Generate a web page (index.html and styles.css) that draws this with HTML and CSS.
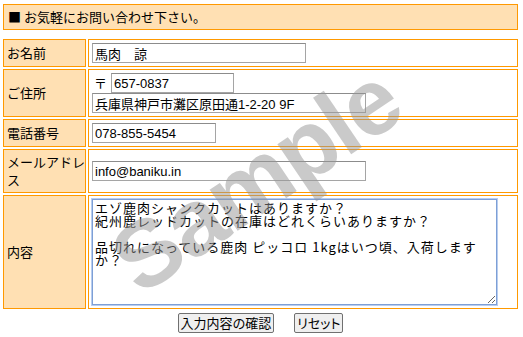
FILE: index.html
```html
<!DOCTYPE html>
<html lang="ja">
<head>
  <meta charset="UTF-8" />
  <meta name="viewport" content="width=device-width, initial-scale=1.0"/>
  <title>お問い合わせ</title>
  <link rel="stylesheet" href="styles.css">
</head>
<body>
  <div class="wrap">
    <div class="lead">■ お気軽にお問い合わせ下さい。</div>

    <table class="form">
      <tr>
        <th>お名前</th>
        <td><input type="text" class="w-name" value="馬肉　諒"></td>
      </tr>
      <tr>
        <th>ご住所</th>
        <td>
          <div class="zip"><span>〒</span><input type="text" class="w-zip" value="657-0837"></div>
          <input type="text" class="w-addr" value="兵庫県神戸市灘区原田通1-2-20 9F">
        </td>
      </tr>
      <tr>
        <th>電話番号</th>
        <td><input type="text" class="w-tel" value="078-855-5454"></td>
      </tr>
      <tr>
        <th>メールアドレス</th>
        <td><input type="text" class="w-addr" value="info@baniku.in"></td>
      </tr>
      <tr>
        <th>内容</th>
        <td><textarea class="msg" spellcheck="false">エゾ鹿肉シャンクカットはありますか？
紀州鹿レッドカットの在庫はどれくらいありますか？

品切れになっている鹿肉 ピッコロ 1kgはいつ頃、入荷しますか？</textarea></td>
      </tr>
    </table>

    <div class="buttons">
      <button type="button">入力内容の確認</button>
      <button type="reset">リセット</button>
    </div>
  </div>

  <div class="sample">Sample</div>
</body>
</html>
```

FILE: styles.css
```css
body {
  font-family: 'Liberation Sans', 'Noto Sans CJK JP', sans-serif;
  font-size: 13px;
  color: #000;
  background: #fff;
  margin: 0;
}
.wrap {
  padding: 4px 3px 0 1px;
}
.lead {
  box-sizing: border-box;
  height: 26px;
  margin: 0 2px 7px;
  padding: 0 4px;
  font-family: 'Noto Sans CJK JP', sans-serif;
  line-height: 24px;
  background: #ffe0b3;
  border: 1px solid #ff9900;
  overflow: hidden;
}
.form {
  width: 100%;
  border-collapse: separate;
  border-spacing: 2px;
}
.form th,
.form td {
  border: 1px solid #ff9900;
  vertical-align: middle;
}
.form th {
  width: 78px;
  padding: 3px 0 3px 3px;
  background: #ffe0b3;
  font-family: 'Noto Sans CJK JP', sans-serif;
  font-weight: normal;
  text-align: left;
  line-height: 18px;
}
.form td {
  padding: 3px;
  background: #fff;
  line-height: 16px;
}
input {
  display: block;
  box-sizing: border-box;
  height: 20px;
  margin: 0;
  padding: 1px 2px;
  font-family: 'Liberation Sans', 'Noto Sans CJK JP', sans-serif;
  font-size: 13px;
  border: 1px solid #a5a5a5;
  border-top-color: #8c8c8c;
}
.zip {
  display: flex;
  align-items: center;
  gap: 4px;
  padding-left: 2px;
  font-family: 'Noto Sans CJK JP', sans-serif;
}
.w-name { width: 214px; }
.w-zip { width: 123px; }
.w-addr { width: 274px; }
.w-tel { width: 124px; }
.msg {
  display: block;
  box-sizing: border-box;
  width: 405px;
  height: 106px;
  margin: 0;
  padding: 1px 2px;
  font-family: 'Noto Sans CJK JP', sans-serif;
  font-size: 13px;
  line-height: 13px;
  letter-spacing: 1px;
  border: 1px solid #7d9fd6;
  box-shadow: 0 0 0 1px #b8cdef;
  outline: none;
  resize: both;
}
.buttons {
  display: flex;
  justify-content: center;
  gap: 20px;
  margin-top: 2px;
}
button {
  height: 20px;
  padding: 0 2px;
  font-family: 'Noto Sans CJK JP', sans-serif;
  font-size: 13px;
  font-feature-settings: "palt";
  line-height: 16px;
  background: #efefef;
  border: 1px solid #707070;
  border-radius: 2px;
  color: #000;
}
.sample {
  position: absolute;
  left: 256px;
  top: 180px;
  transform: translate(-50%, -50%) rotate(-34deg);
  font-family: 'Liberation Sans', sans-serif;
  font-weight: bold;
  font-size: 94px;
  letter-spacing: -2px;
  color: rgba(150, 150, 150, 0.5);
  pointer-events: none;
  white-space: nowrap;
}
```
